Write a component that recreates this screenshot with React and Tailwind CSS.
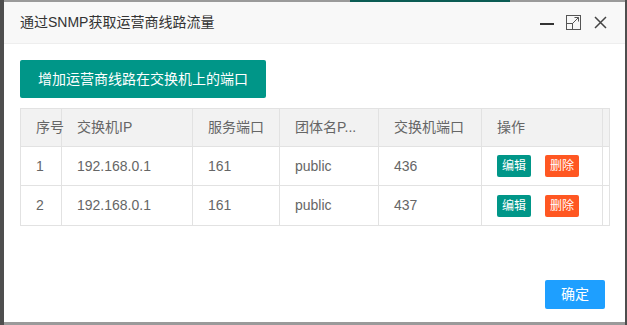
import React from "react";

const font = { fontFamily: '"Liberation Sans", "Noto Sans CJK SC", sans-serif' };

const rows = [
  { id: 1, ip: "192.168.0.1", port: "161", community: "public", swPort: "436" },
  { id: 2, ip: "192.168.0.1", port: "161", community: "public", swPort: "437" },
];

const cols = "grid grid-cols-[41px_131px_87px_99px_103px_121px_7px]";

export default function App() {
  return (
    <div className="relative w-[627px] h-[325px] overflow-hidden bg-[#9a9a9a]" style={font}>
      <div className="absolute left-0 top-0 w-[4px] h-full bg-[#4e4e4e]" />
      <div className="absolute right-0 top-0 w-[2px] h-full bg-[#4e4e4e]" />
      <div className="absolute left-[350px] top-0 w-[160px] h-[2px] bg-[#0b5c54]" />
      <div className="absolute left-[4px] top-[2px] w-[621px] h-[320px] bg-white flex flex-col">
        <div className="h-[42px] shrink-0 bg-[#f8f8f8] border-b border-[#eeeeee] flex items-center pl-[16px] pr-[18px]">
          <span className="text-[14px] text-[#333]">通过SNMP获取运营商线路流量</span>
          <div className="ml-auto flex items-center gap-[12px]">
            <svg width="14" height="14" viewBox="0 0 14 14" className="mt-[1px]">
              <rect x="0" y="7" width="14" height="2" fill="#333" />
            </svg>
            <svg width="15" height="15" viewBox="0 0 15 15">
              <rect x="0.5" y="0.5" width="14" height="14" fill="none" stroke="#555" strokeWidth="1" />
              <rect x="0.5" y="8.5" width="6" height="6" fill="none" stroke="#555" strokeWidth="1" />
              <path d="M7 8 L12.5 2.5 M8.5 2.5 H12.5 V6.5" fill="none" stroke="#555" strokeWidth="1" />
            </svg>
            <svg width="13" height="13" viewBox="0 0 13 13" className="ml-[1px]">
              <path d="M1 1 L12 12 M12 1 L1 12" stroke="#444" strokeWidth="1.5" fill="none" />
            </svg>
          </div>
        </div>
        <div className="px-[16px] pt-[16px] flex flex-col">
          <button className="self-start h-[38px] w-[246px] rounded-[2px] bg-[#009688] text-white text-[14px] flex items-center justify-center">
            增加运营商线路在交换机上的端口
          </button>
          <div className="mt-[10px] w-[590px] border border-[#e2e2e2] text-[14px] text-[#666]">
            <div className={`${cols} h-[38px] bg-[#f2f2f2] border-b border-[#e2e2e2]`}>
              {["序号", "交换机IP", "服务端口", "团体名P...", "交换机端口", "操作", ""].map((t, i) => (
                <div key={i} className={`flex items-center whitespace-nowrap pl-[15px] ${i < 6 ? "border-r border-[#e2e2e2]" : ""}`}>
                  {t}
                </div>
              ))}
            </div>
            {rows.map((r, ri) => (
              <div key={r.id} className={`${cols} h-[39px] ${ri === 0 ? "border-b border-[#e2e2e2]" : ""}`}>
                <div className="flex items-center pl-[15px] border-r border-[#e2e2e2]">{r.id}</div>
                <div className="flex items-center pl-[15px] border-r border-[#e2e2e2]">{r.ip}</div>
                <div className="flex items-center pl-[15px] border-r border-[#e2e2e2]">{r.port}</div>
                <div className="flex items-center pl-[15px] border-r border-[#e2e2e2]">{r.community}</div>
                <div className="flex items-center pl-[15px] border-r border-[#e2e2e2]">{r.swPort}</div>
                <div className="flex items-center pl-[15px] border-r border-[#e2e2e2] gap-[14px]">
                  <span className="h-[22px] w-[34px] rounded-[2px] bg-[#009688] text-white text-[12px] flex items-center justify-center">编辑</span>
                  <span className="h-[22px] w-[34px] rounded-[2px] bg-[#FF5722] text-white text-[12px] flex items-center justify-center">删除</span>
                </div>
                <div />
              </div>
            ))}
          </div>
        </div>
        <div className="mt-auto flex justify-end pr-[20px] pb-[13px]">
          <button className="h-[29px] w-[60px] rounded-[2px] bg-[#1E9FFF] text-white text-[14px] flex items-center justify-center">
            确定
          </button>
        </div>
      </div>
    </div>
  );
}
